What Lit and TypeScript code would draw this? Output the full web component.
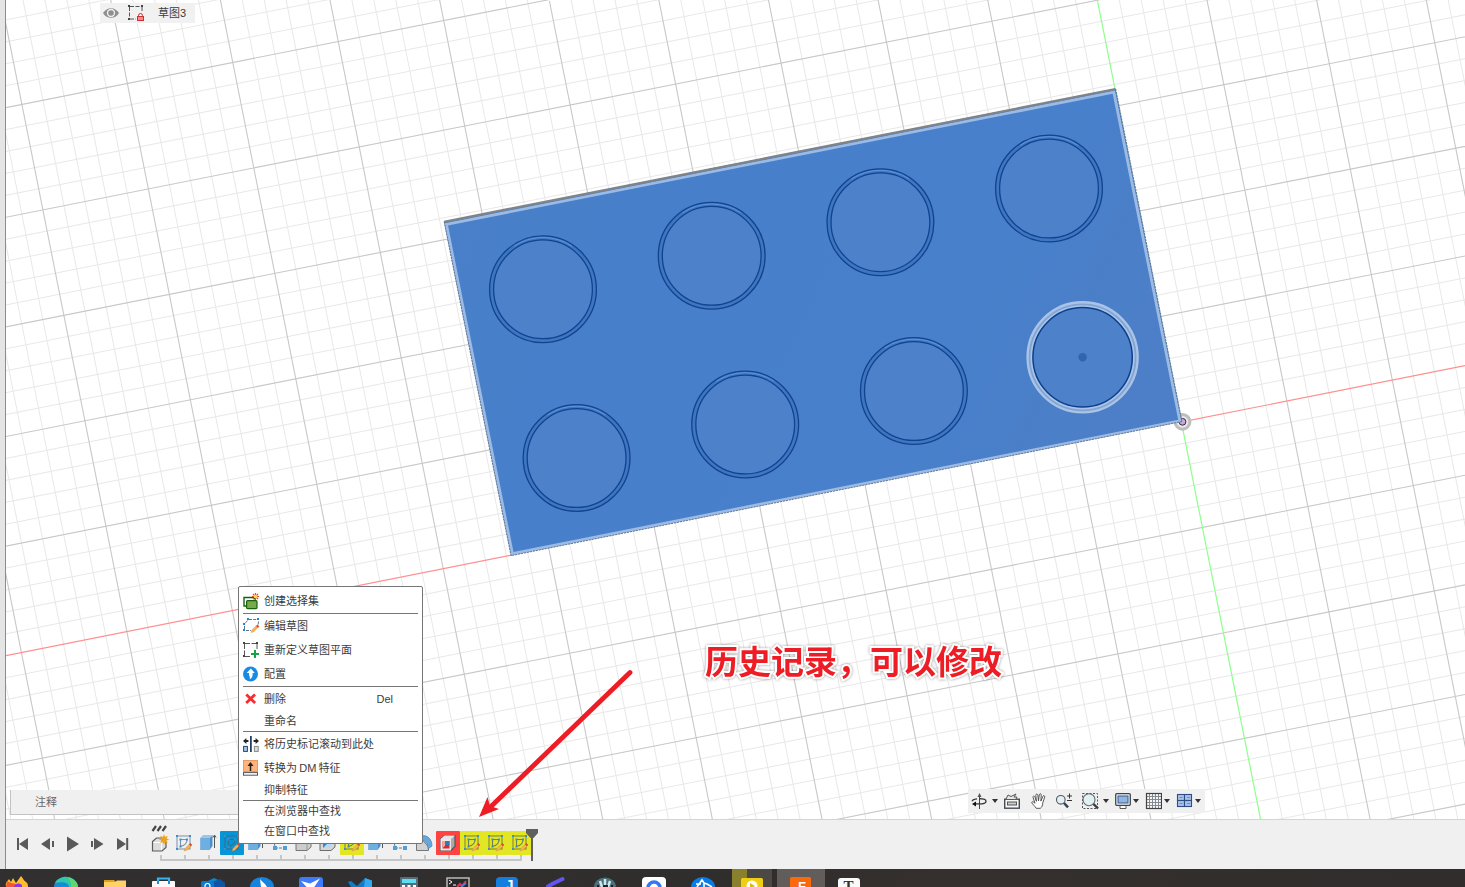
import { LitElement, html, svg, css, nothing } from "lit";
import { customElement, property } from "lit/decorators.js";

const ORIGIN = [1181.4, 422];
const U = [105.45, -20.97];
const V = [21, 105.45];

function gridPath(major: boolean): string {
  let d = "";
  for (let i = -80; i <= 45; i++) {
    if ((i % 5 === 0) !== major || i === 0) continue;
    const k = i / 5;
    const ax = ORIGIN[0] + U[0] * k, ay = ORIGIN[1] + U[1] * k;
    d += `M${ax - V[0] * 16} ${ay - V[1] * 16}L${ax + V[0] * 16} ${ay + V[1] * 16}`;
    const bx = ORIGIN[0] + V[0] * k, by = ORIGIN[1] + V[1] * k;
    d += `M${bx - U[0] * 16} ${by - U[1] * 16}L${bx + U[0] * 16} ${by + U[1] * 16}`;
  }
  return d;
}

const STUDS = [[543, 289.3], [711.7, 255.8], [880.4, 222.2], [1049, 188.5], [576.6, 458], [745.2, 424.5], [913.9, 391]];

@customElement("model-canvas")
class ModelCanvas extends LitElement {
  static styles = css`
    :host { display: block; }
    svg { display: block; }
  `;
  render() {
    return html`<svg width="1459" height="819" viewBox="6 0 1459 819">
      <defs>
        <linearGradient id="face" x1="0" y1="0" x2="1" y2="0.3">
          <stop offset="0" stop-color="#4b80c9"/><stop offset=".3" stop-color="#477fca"/>
          <stop offset=".8" stop-color="#4880cb"/><stop offset="1" stop-color="#4c7fc7"/>
        </linearGradient>
      </defs>
      <rect x="6" width="1459" height="820" fill="#fff"/>
      <path d=${gridPath(false)} stroke="#e8e8e8" stroke-width="1" fill="none"/>
      <path d=${gridPath(true)} stroke="#c8c8c8" stroke-width="1.1" fill="none"/>
      <path d="M6 655.6L512 555M1182 421.9L1465 365.6" stroke="#ff9090" stroke-width="1.2"/>
      <path d="M1097.3 0L1260.7 820" stroke="#8dff8d" stroke-width="1.2"/>
      <circle cx="1182.5" cy="421.8" r="7.4" fill="#e9e9e9" stroke="#bdbdbd" stroke-width="3"/>
      <circle cx="1182.5" cy="421.8" r="3.4" fill="#c9a9cf" stroke="#342b48"/>
      <path d="M444 221.5L1115.5 88.5L1182 421.5L511 555.5Z" fill="url(#face)"/>
      <path d="M446.4 224.4L1113.8 92.1L1179.8 420.8L512.4 553.6Z" fill="none" stroke="#9bbbe5" stroke-width="2.8"/>
      <path d="M444 221.8L1115.4 89" stroke="#808489" stroke-width="2.2"/>
      <path d="M1115.7 89L1182 421.5L511 555.7L444.2 222" fill="none" stroke="#68758a" stroke-width="1" stroke-dasharray="2 1"/>
      ${STUDS.map(([x, y]) => svg`
        <circle cx=${x} cy=${y} r="53.4" fill="#3e76c3" stroke="#12438d" stroke-width="1.3"/>
        <circle cx=${x} cy=${y} r="49.4" fill="#4d81c9" stroke="#12438d" stroke-width="1.3"/>
        <path d=${`M${x - 29} ${y - 43}A52 52 0 0 1 ${x + 29} ${y - 43}`} fill="none" stroke="#5e94db" stroke-width="1"/>`)}
      <circle cx="1082.6" cy="357.3" r="53" fill="#4d81c9" stroke="#a9c4e8" stroke-width="6.4"/>
      <circle cx="1082.6" cy="357.3" r="53" fill="none" stroke="#83a4d1" stroke-width="1.8"/>
      <circle cx="1082.6" cy="357.3" r="49.7" fill="none" stroke="#0c3f8d" stroke-width="1.5"/>
      <circle cx="1082.6" cy="357.2" r="4.2" fill="#3264af"/>
    </svg>`;
  }
}

const pencil = (x: number, y: number) => svg`
  <path d=${`M${x} ${y}l1-2.6 4.2-4.2 1.8 1.8-4.2 4.2z`} fill="#f6b44b" stroke="#c98c3d" stroke-width=".4"/>
  <path d=${`M${x + 5} ${y - 6.6}l1.4-1.3 1.9 1.9-1.4 1.3z`} fill="#e8443a"/>`;

const MENU_ICONS: Record<string, unknown> = {
  set: svg`<path d="M247 606h-3v-8.500h10.500v2" fill="none" stroke="#17620f" stroke-width="1.4"/>
    <rect x="246.6" y="600.6" width="10.4" height="8" rx="1" fill="#78a94c" stroke="#17620f" stroke-width="1.2"/>
    <path d="M255.5 593v7M252 596.5h7M253 594l5 5M258 594l-5 5" stroke="#d9491c" stroke-width="1.1"/><circle cx="255.5" cy="596.5" r="1.8" fill="#ffd84a"/>`,
  edit: svg`<path d="M249 619.500h8M258.500 621.500c0 3-1 5-3 7M247.500 620.500l-3 3.500M244.500 626v3M246 630.500h5" fill="none" stroke="#5d7488" stroke-width="1" stroke-dasharray="3 1.2"/>
    <path d="M247 618h2v2h-2zM257 618h2v2h-2zM243 623h2v2h-2zM243 629h2v2h-2z" fill="#1588e5"/>${pencil(251, 632.5)}`,
  plane: svg`<path d="M245 643.5h11.5M244.5 644v11M257 644v6M245 656.5h6" fill="none" stroke="#555" stroke-width="1" stroke-dasharray="5 1.5"/>
    <path d="M243 642h2v2h-2zM256 642h2v2h-2zM243 655h2v2h-2z" fill="#444"/><path d="M255 650v8M251 654h8" stroke="#17a34a" stroke-width="2"/>`,
  config: svg`<circle cx="250.5" cy="674" r="7.5" fill="#178be3"/><path d="M250.8 668.5l4 4.5h-2.2c.5 3-.6 5.2-2.8 6.2v-2.4c-.8-1-.9-2.5-.8-3.8h-2.3z" fill="#fff"/>`,
  del: svg`<path d="M246.3 694.5l8.800 8.600M255 694.5l-8.800 8.600" stroke="#fa2b2e" stroke-width="2.800"/>`,
  roll: svg`<path d="M250.9 736v16" stroke="#1d355c" stroke-width="1.7"/><path d="M243 741l3.4-3v2.1h2v1.8h-2v2.1zM259 741l-3.4-3v2.1h-2v1.8h2v2.1z" fill="#242424"/>
    <rect x="243.6" y="746.4" width="3.8" height="5" fill="#a7c8ee" stroke="#24446f"/><rect x="254.4" y="746.4" width="3.8" height="5" fill="#ddd" stroke="#888"/>`,
  dm: svg`<rect x="243.5" y="760.5" width="14" height="11" fill="#ffb37d" stroke="#e99a62"/><path d="M250.5 771v-6" stroke="#222" stroke-width="1.5"/><path d="M247.5 766l3-4 3 4z" fill="#222"/>
    <rect x="243.5" y="772.6" width="14" height="2.6" fill="#fff" stroke="#555"/>`,
};

// label, icon, row top, row height, shortcut, rule below
type Row = [string, string, number, number, string, boolean];
const MENU: Row[] = [
  ["创建选择集", "set", 587, 26, "", true],
  ["编辑草图", "edit", 614, 24, "", false],
  ["重新定义草图平面", "plane", 638, 24, "", false],
  ["配置", "config", 662, 24, "", true],
  ["删除", "del", 687, 24, "Del", false],
  ["重命名", "", 711, 20, "", true],
  ["将历史标记滚动到此处", "roll", 732, 24, "", false],
  ["转换为 DM 特征", "dm", 756, 24, "", false],
  ["抑制特征", "", 780, 20, "", true],
  ["在浏览器中查找", "", 801, 20, "", false],
  ["在窗口中查找", "", 821, 20, "", false],
];

@customElement("context-menu")
class ContextMenu extends LitElement {
  static styles = css`
    :host { display: block; box-sizing: border-box; width: 185px; height: 258px; background: #fff; border: 1px solid #767676; border-radius: 2px;
      font: 11px "Liberation Sans", "Noto Sans CJK SC", sans-serif; color: #3c3c3c; }
    .row { display: flex; align-items: center; padding-left: 4px; }
    .row:first-of-type .label { padding-top: 1px; }
    svg { display: block; flex: none; width: 17px; margin-right: 4px; }
    .label { flex: 1; white-space: nowrap; line-height: 16px; word-spacing: -0.8px; }
    .key { margin-right: 29px; }
    .rule { height: 1px; margin: 0 4px; background: #767676; }
  `;
  render() {
    return MENU.map(([label, icon, y, h, key, rule]) => html`
      <div class="row">
        <svg width="17" height=${h} viewBox=${`243 ${y} 17 ${h}`}>${icon ? MENU_ICONS[icon] : nothing}</svg>
        <span class="label">${label}</span>${key ? html`<span class="key">${key}</span>` : nothing}
      </div>${rule ? html`<div class="rule"></div>` : nothing}`);
  }
}

const caret = (x: number) => svg`<path d=${`M${x - 3} 799h6l-3 4z`} fill="#333"/>`;
const NAV: [number, number, unknown][] = [
  [969, 20, svg`<path d="M979.5 794v15" stroke="#444" stroke-width="1"/><path d="M977.5 797l2-4 2 4z" fill="#555"/><path d="M979 798.6c4.5 0 7 1 7 2.6s-3 2.7-6.5 2.7c-2 0-4-.1-5.5-.6M977 798.9c-3 .4-4.8 1.3-4.8 2.3" fill="none" stroke="#333" stroke-width="1.3"/><path d="M972 804l4-2.6v5.2z" fill="#111"/>`],
  [989, 12, caret(995)],
  [1001, 24, svg`<rect x="1004.7" y="799.2" width="14.6" height="9" fill="#f7f7f7" stroke="#444b52" stroke-width="1.4"/><rect x="1007.5" y="802" width="9" height="3" fill="#c8ccd0" stroke="#555"/><path d="M1006 799l2-4 3 1.500 5-2.500-2 3h3l-1 2" fill="#e5e5e5" stroke="#555"/>`],
  [1025, 27, svg`<path d="M1035 808c-1-2-4-4-4.5-6 1-1.1 2.2-.1 3.3 1l-2-6c-.1-1.7 1.4-1.7 2 0l1.4 4-.6-6c.2-1.7 1.700-1.700 2 0l.7 5.6.8-6.2c.4-1.4 2-1.2 1.9.4l-.3 6 2-4.8c.7-1.3 2.2-.6 1.8.8l-2 6c0 2.4-.8 4-2.4 5.2z" transform="translate(1.2 .3)" fill="#fff" stroke="#444" stroke-width=".9"/>`],
  [1052, 25, svg`<circle cx="1060.8" cy="799.8" r="4.3" fill="#e5f0f0" stroke="#4c5968" stroke-width="1.1"/><path d="M1064 803l4 4.3" stroke="#314253" stroke-width="2.5"/><path d="M1069.5 793.5v5M1067 796h5M1067 800.5h5" stroke="#333" stroke-width="1"/>`],
  [1077, 23, svg`<rect x="1082.5" y="793.5" width="15" height="15" fill="none" stroke="#555" stroke-width="1" stroke-dasharray="2 1.5"/><circle cx="1089" cy="799.7" r="6" fill="#e2f0f0" stroke="#606b72" stroke-width="1.1"/><path d="M1093.5 804l4.5 4.5" stroke="#3a3a3a" stroke-width="2.4"/>`],
  [1100, 12, caret(1106)],
  [1112, 19, svg`<rect x="1115.7" y="793.7" width="14.6" height="11.6" rx="1" fill="#f4f4f4" stroke="#3d4650" stroke-width="1.3"/><rect x="1118" y="796" width="10" height="7" fill="#91b5e0" stroke="#34598e"/><path d="M1120 806v2.5h6V806" fill="#fff" stroke="#555"/>`],
  [1131, 12, caret(1136)],
  [1143, 19, svg`<rect x="1146" y="793" width="16" height="16" fill="#f7f7f7"/><path d="M1149.5 793v15M1152.5 793v15M1155.5 793v15M1158.5 793v15M1146 796.5h15M1146 799.5h15M1146 802.5h15M1146 805.5h15" stroke="#828b93"/><rect x="1146.5" y="793.5" width="15" height="15" fill="none" stroke="#414141" stroke-width="1.2"/>`],
  [1162, 13, caret(1167)],
  [1175, 18, svg`<g fill="#a8c2e8" stroke="#2d4d86" stroke-width="1.1"><rect x="1177.5" y="794.5" width="7" height="6"/><rect x="1184.5" y="794.5" width="7" height="6"/><rect x="1177.5" y="800.5" width="7" height="6"/><rect x="1184.5" y="800.5" width="7" height="6"/></g><path d="M1179.5 797.500h3M1187 797.500h3M1179.5 803.500h3M1187 803.500h3" stroke="#6c8fc3"/>`],
  [1193, 12, caret(1198)],
];

@customElement("nav-bar")
class NavBar extends LitElement {
  static styles = css`
    :host { display: flex; background: #f0f0f0; padding-left: 1px; height: 24px; }
    svg { display: block; flex: none; }
  `;
  render() {
    return NAV.map(([x, w, g]) => html`<svg width=${w} height="24" viewBox=${`${x} 789 ${w} 24`}>${g}</svg>`);
  }
}

const sketchGlyph = (line: string) => svg`<rect x="5" y="5" width="13" height="13" fill="none" stroke=${line} stroke-width="1"/>
  <path d="M8.5 8.5h6.5c0 4-2 6-6.5 7z" fill="none" stroke=${line} stroke-width="1.1"/>
  <path d="M4 4h2v2H4zM17 4h2v2h-2zM4 17h2v2H4zM7.5 7.5h2v2h-2zM14 7.5h2v2h-2zM7.5 14.5h2v2h-2z" fill="#3f8fc8"/>${pencil(12, 20)}`;
const GLYPHS: Record<string, unknown> = {
  create: svg`<path d="M4.500 10.500l4-3.500h6l3.500 4v5.500l-4 3.500H4.500z" fill="#ddd" stroke="#5b5b5b" stroke-width="1.2"/><path d="M5.500 11.500h8v7.500" fill="none" stroke="#fff"/>
    <path d="M15.500 4l1.100 2.700 2.600-1.100-1.100 2.600 2.700 1.100-2.700 1.100 1.100 2.600-2.600-1.100-1.100 2.700-1.100-2.700-2.600 1.100 1.100-2.600-2.700-1.100 2.700-1.100-1.100-2.600 2.600 1.100z" transform="translate(.5 -.8)" fill="#f2a014"/>`,
  sketch: sketchGlyph("#7992a7"),
  extrude: svg`<path d="M4.500 7l3-3h9v11l-3 4h-9z" fill="#4e8ec9"/><path d="M4.500 7h9.500v12H4.500z" fill="#6faee0"/><path d="M4.500 7l3-3h9.500l-3 3z" fill="#9ac7eb"/><path d="M18.500 5v12M17 6.500l1.500-2.500 1.500 2.500" stroke="#555" fill="none"/>`,
  pattern: svg`<path d="M7 17h10M5 9l2 6" stroke="#777" stroke-dasharray="3 1"/><path d="M5 15h4v4H5zM15 15h4v4h-4z" fill="#4f9fdb"/>`,
  fillet: svg`<path d="M4 10l4-4h7l4 3v7l-4 3.500H4z" fill="#cdcdcd" stroke="#777"/><path d="M15 10v9" stroke="#999"/>`,
  cut: svg`<path d="M4 8l4-3h11v11l-4 3.500H4z" fill="#d6d6d6" stroke="#6d6d6d"/><path d="M7 9h8v8H7z" fill="#3d86c4"/><path d="M7 17l4-4h4v4z" fill="#b9d9f2"/>`,
  round: svg`<path d="M4.500 9h6l6 7v3.500h-12z" fill="#d2d2d2" stroke="#777"/><path d="M8 5c7-2 12 3 12 10l-4 3c0-6-3-9-8-9z" fill="#62a7dd" stroke="#3f83b8" stroke-width=".7"/>`,
  shell: svg`<path d="M4.500 8l4-3.500h10.500v11l-4 4H4.500z" fill="#aaa" stroke="#555" stroke-width="1.200"/><path d="M4.500 8H15v11.500H4.500z" fill="#f2e5e5"/><path d="M4.500 8l4-3.500H19L15 8z" fill="#e4e4e4"/><path d="M6.500 10h7v7.500h-7z" fill="#d9292e"/><path d="M6.500 17.500l2.500-3V10h-2.500z" fill="#f1a5a5"/><path d="M9 10h4.500v4H9z" fill="#3579b2"/>`,
};
const STEPS: [string, string][] = [
  ["create", ""], ["sketch", ""], ["extrude", ""], ["sketch", "#0696d7"], ["extrude", ""], ["pattern", ""], ["fillet", ""], ["cut", ""],
  ["sketch", "#e3e622"], ["extrude", ""], ["pattern", ""], ["round", ""], ["shell", "#ff4242"], ["sketch", "#e3e622"], ["sketch", "#e3e622"], ["sketch", "#e3e622"],
];

@customElement("history-timeline")
class HistoryTimeline extends LitElement {
  static styles = css`
    :host { display: flex; position: relative; height: 50px; box-sizing: border-box; background: #f0f0f0; border-top: 1px solid #d4d4d4; }
    svg { display: block; flex: none; }
    .play { margin-right: 12px; }
    .steps { display: flex; padding-top: 11px; }
    .marker { position: absolute; left: 519px; top: 8px; }
    .grip { position: absolute; left: 144px; top: 4px; }
  `;
  render() {
    return html`
      <svg class="play" width="130" height="48" viewBox="6 820 130 48">
        <g fill="#595959"><path d="M17 838h2v12h-2zM28 838v12l-9-6zM41 844l9-6v12zM52 841h2v6h-2zM67 836.500v15l12-7.500zM91 841h2v6h-2zM94 838v12l9.500-6zM117 838v12l9-6zM126.200 838h2v12h-2z"/></g>
      </svg>
      <div class="steps">
        ${STEPS.map(([g, bg], i) => html`<svg width="24" height="30" viewBox="0 0 24 30">
          ${bg ? svg`<rect width="24" height="24" rx="1" fill=${bg}/>` : nothing}
          ${bg === "#0696d7" ? sketchGlyph("#356d8f") : bg === "#e3e622" ? sketchGlyph("#77803b") : GLYPHS[g]}
          <path d=${`M13 24v5M${i ? 0 : 12} 29H${i === 15 ? 14 : 24}`} stroke="#c6c6c6" stroke-width="2" fill="none"/>
        </svg>`)}
      </div>
      <svg class="marker" width="16" height="34" viewBox="525 828 16 34"><path d="M526 829h12v4l-4.500 5h-3l-4.500-5z" fill="#5f5f5f"/><path d="M532 836v25" stroke="#5f5f5f" stroke-width="2"/></svg>
      <svg class="grip" width="20" height="8" viewBox="150 824 20 8"><path d="M152.500 831l3.500-5M157.500 831l3.500-5M162.500 831l3.500-5" stroke="#444" stroke-width="2.200"/></svg>`;
  }
}

const APPS: unknown[] = [
  svg`<path d="M6 887c-1-5 2-6 3-8l2 3 2-4 3 5 5-7c2 2 2 4 5 6 2 1 2 4 2 5z" fill="#ffbd2d"/><path d="M6 887l1-6 4 2 5 1 3 3z" fill="#f05736"/><path d="M14 887c1-3 4-5 8-2v2z" fill="#8739e8"/>`,
  svg`<path d="M54 887a12 10 0 0 1 24 0z" fill="#168cd8"/><path d="M55 883c4-9 21-9 23 4h-9c0-4-5-6-14-4z" fill="#2fc7ae"/><path d="M68 878c5 0 10 4 10 9h-7c1-4-1-6-3-9z" fill="#62d765"/>`,
  svg`<path d="M104 880h10l3 3h9v4h-22z" fill="#e9a51d"/><path d="M104 883h22v4h-22z" fill="#ffd05c"/><path d="M104 882h11l2-1.500h9v6.500h-22z" fill="#ffd166"/><path d="M104 880h9l2 2h-11z" fill="#e0a019"/>`,
  svg`<path d="M158 882v-3.500h11v3.500" fill="none" stroke="#37b3ed" stroke-width="2.200"/><rect x="152" y="881" width="23" height="7" rx="1" fill="#fafafa"/><path d="M157 881h2v3h-2zM168 881h2v3h-2z" fill="#208ad4"/>`,
  svg`<path d="M206 882l8-4 11 5v4h-19z" fill="#1382d3"/><path d="M212 882l8-3 5 4v4h-12z" fill="#0c56a7"/><rect x="201" y="881" width="13" height="7" rx="1.500" fill="#087acb"/><circle cx="207.500" cy="886" r="2.500" fill="none" stroke="#fff" stroke-width="1.200"/>`,
  svg`<path d="M250 887a12 10 0 0 1 24 0z" fill="#1683de"/><path d="M260 879c2 3 5 4 7 8h-6z" fill="#fff"/>`,
  svg`<rect x="299" y="877" width="24" height="14" rx="3" fill="#3d7bfa"/><path d="M301 881l9 2.500 10-5-6 9h-7z" fill="#fff"/>`,
  svg`<path d="M348 882l3-1 6 5 8-8 7 3v6h-21z" fill="#137bc2"/><path d="M365 878l7 2.500v7h-8z" fill="#31a8ef"/>`,
  svg`<rect x="400" y="877" width="18" height="12" rx="1" fill="#526e7a"/><rect x="402" y="879" width="14" height="4" fill="#5edcf2"/><path d="M402 885h3v2h-3zM407.500 885h3v2h-3zM413 885h3v2h-3z" fill="#fff"/>`,
  svg`<rect x="447" y="878" width="22" height="12" fill="#292929" stroke="#bbb" stroke-width="1.500"/><path d="M449 880l3 2-3 2M453 885h3" stroke="#fff" fill="none"/><path d="M457 887l3-3 2 2 4-5" stroke="#db3a48" stroke-width="2" fill="none"/><path d="M461 887l5-4" stroke="#3a83f0" stroke-width="2"/>`,
  svg`<rect x="496" y="877" width="22" height="14" rx="4" fill="#137de0"/><text x="505.500" y="890" font-size="14" font-weight="700" fill="#fff" class="mono">J</text>`,
  svg`<path d="M548 886.500l5-3M553 883.500l9.500-4.500" stroke="#6256ef" stroke-width="4" stroke-linecap="round" fill="none"/>`,
  svg`<path d="M594 887a11 9.500 0 0 1 22 0z" fill="#4d7078"/><path d="M600 881l2 6M605 879v6M610 881l-2 6" stroke="#c9e8ef" stroke-width="2.500"/><path d="M603 886h5M598 885v2M612 885v2" stroke="#17222a" stroke-width="2"/>`,
  svg`<rect x="642" y="877" width="24" height="14" rx="4" fill="#fff"/><circle cx="654" cy="888" r="6" fill="none" stroke="#3378ef" stroke-width="3.500"/>`,
  svg`<path d="M691 887a12 10 0 0 1 24 0z" fill="#0a7be3"/><path d="M697 887l5-7 2 3 3 1 5 3M696 884h5M704 883v4" stroke="#fff" stroke-width="1.600" fill="none"/>`,
  svg`<path d="M732 869h15v18h-15z" fill="#89802d"/><path d="M747 869h25v18h-25z" fill="#4c4844"/><rect x="741" y="878" width="22" height="12" rx="1.500" fill="#f2ce12"/><circle cx="752" cy="886" r="5.500" fill="#fff"/><path d="M750 883l5 3-5 3z" fill="#e1b900"/>`,
  svg`<path d="M777 869h48v18h-48z" fill="#625d5b"/><rect x="790" y="877" width="21" height="14" rx="1.500" fill="#fa6a0a"/><text x="798" y="890.500" font-size="13" font-weight="700" fill="#fff">F</text>`,
  svg`<rect x="838" y="878" width="22" height="12" rx="3" fill="#fafafa"/><text x="843.500" y="891" font-size="15" font-weight="700" fill="#333" class="serif">T</text>`,
];
const APP_X = [0, 42, 91, 139, 188, 238, 287, 336, 385, 434, 483, 532, 580, 630, 679, 728, 776, 826, 875];

@customElement("task-bar")
class TaskBar extends LitElement {
  static styles = css`
    :host { display: flex; height: 18px; background: linear-gradient(90deg, #312f2f, #302d2d 50%, #35302d 65%, #302d2c); overflow: hidden; font-family: "Liberation Sans", sans-serif; }
    svg { display: block; flex: none; }
    .serif { font-family: "Liberation Serif", serif; }
    .mono { font-family: "Liberation Mono", monospace; }
  `;
  render() {
    return APPS.map((g, i) => {
      const w = APP_X[i + 1] - APP_X[i];
      return html`<svg width=${w} height="18" viewBox=${`${APP_X[i]} 869 ${w} 18`}>${g}</svg>`;
    });
  }
}

@customElement("app-root")
class AppRoot extends LitElement {
  @property() note = "历史记录，可以修改";
  static styles = css`
    :host { display: flex; flex-direction: column; width: 1465px; height: 887px; position: relative; overflow: hidden;
      font: 11px "Liberation Sans", "Noto Sans CJK SC", sans-serif; color: #3c3c3c; }
    .window { display: flex; height: 869px; }
    .gutter { width: 5px; background: #e5e5e5; border-right: 1px solid #8c8c8c; }
    .main { display: flex; flex-direction: column; width: 1459px; }
    .work { position: relative; height: 819px; }
    .over { position: absolute; }
    .browser { left: 94px; top: 3px; width: 95px; height: 20px; background: #f1f1f1; display: flex; align-items: center; }
    .browser span { margin-left: 12px; line-height: 16px; }
    .comment { left: 4px; top: 790px; width: 240px; height: 25px; box-sizing: border-box; background: #f0f0f0; border: solid #c2c2c2; border-width: 0 0 1px 1px; padding-left: 24px; line-height: 24px; color: #666; }
    .nav { left: 962px; top: 789px; }
    .note { left: 705px; top: 635px; font: 700 33px/50px "Noto Sans CJK SC", sans-serif; color: #ee1c24; white-space: nowrap;
      -webkit-text-stroke: 4px #fff; paint-order: stroke fill; filter: drop-shadow(0 0 1.500px #0006); }
    .arrow { left: 470px; top: 660px; }
    .menu { left: 238px; top: 586px; }
  `;
  render() {
    return html`
      <div class="window">
        <div class="gutter"></div>
        <div class="main">
          <div class="work">
            <model-canvas></model-canvas>
            <div class="over browser">
              <svg width="46" height="20" viewBox="100 3 46 20">
                <path d="M103 13c4-6.500 12-6.500 16 0-4 6.500-12 6.500-16 0z" fill="#8e8e8e"/><circle cx="111" cy="13" r="3.500" fill="#8e8e8e" stroke="#eee" stroke-width="1.400"/>
                <path d="M130 6.500h11M129.500 7v11M142 7v5M130 19h6" fill="none" stroke="#555" stroke-dasharray="4 1.500"/><path d="M128 5h2v2h-2zM141 5h2v2h-2zM128 18h2v2h-2z" fill="#444"/>
                <path d="M138.500 17v-1.500a2 2 0 0 1 4 0V17" fill="none" stroke="#d22d32"/><rect x="137.500" y="16.500" width="6" height="4" fill="#f08d8d" stroke="#d22d32"/>
              </svg><span>草图3</span>
            </div>
            <div class="over comment">注释</div>
            <nav-bar class="over nav"></nav-bar>
          </div>
          <history-timeline></history-timeline>
        </div>
      </div>
      <task-bar></task-bar>
      <svg class="over arrow" width="170" height="165" viewBox="470 660 170 165">
        <path d="M630 672.500L491 806.500" stroke="#ee1c24" stroke-width="4.800" stroke-linecap="round"/><path d="M479 817l8.500-20 2.500 9 9 3z" fill="#ee1c24"/>
      </svg>
      <div class="over note">${this.note}</div>
      <context-menu class="over menu"></context-menu>`;
  }
}
